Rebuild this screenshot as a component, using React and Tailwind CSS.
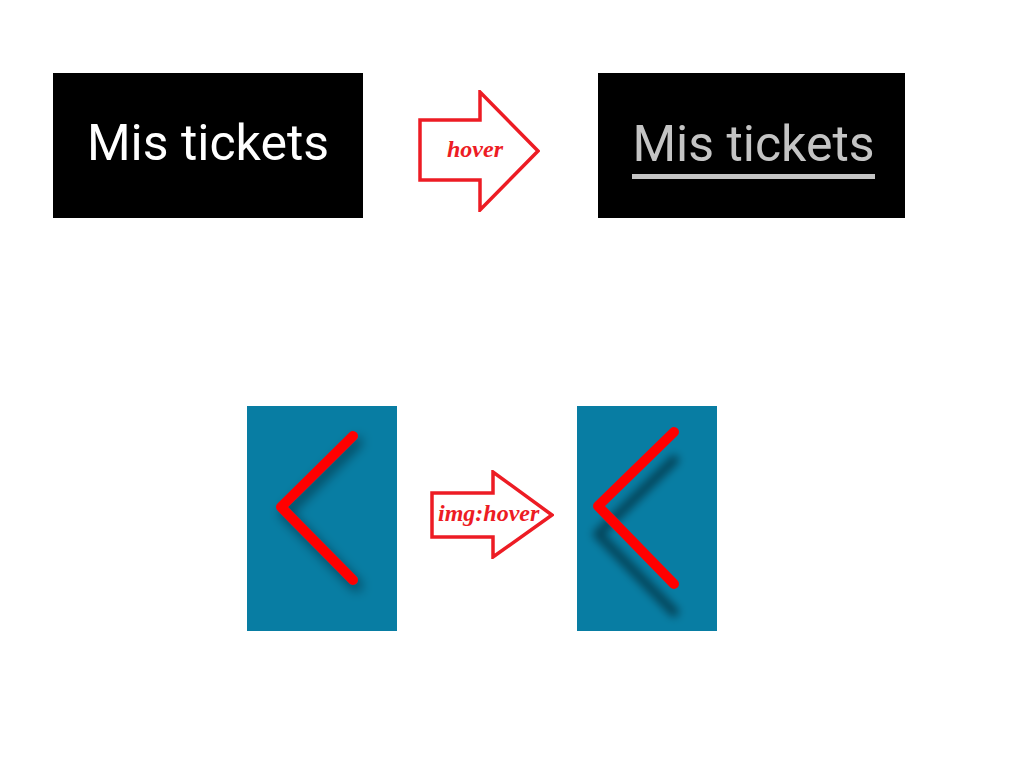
import React from 'react';

// Outlined red arrow with a label inside
const HoverArrow = ({ width, height, body, neck, tipY }) => (
  <svg width={width} height={height} viewBox={`0 0 ${width} ${height}`}>
    <polygon
      points={`2,${body[0]} ${neck},${body[0]} ${neck},2 ${width - 2},${tipY} ${neck},${height - 2} ${neck},${body[1]} 2,${body[1]}`}
      fill="white"
      stroke="#ed1c24"
      strokeWidth="3.5"
    />
  </svg>
);

const Chevron = ({ w, h, points, shadow, id }) => (
  <svg width={w} height={h} viewBox={`0 0 ${w} ${h}`}>
    <defs>
      <filter id={id} x="-50%" y="-50%" width="200%" height="200%">
        <feDropShadow dx={shadow[0]} dy={shadow[1]} stdDeviation={shadow[2]} floodColor="#000" floodOpacity={shadow[3]} />
      </filter>
    </defs>
    <polyline
      points={points}
      fill="none"
      stroke="#ff0000"
      strokeWidth="10"
      strokeLinecap="round"
      strokeLinejoin="round"
      filter={`url(#${id})`}
    />
  </svg>
);

export default function App() {
  return (
    <div className="min-h-[759px] w-[1027px] bg-white font-['Roboto',sans-serif]">
      {/* Top row: menu link hover */}
      <div className="flex items-start pt-[73px] pl-[53px]">
        <div className="flex h-[145px] w-[310px] items-center justify-center bg-black pb-[5px]">
          <span className="text-[50px] leading-none text-white">Mis tickets</span>
        </div>
        <div className="relative ml-[55px] mt-[17px] h-[122px] w-[122px]">
          <HoverArrow width={122} height={122} body={[30, 90]} neck={62} tipY={61} />
          <span className="absolute left-[29px] top-[47px] font-['Liberation_Serif',serif] text-[24px] font-bold italic leading-none text-[#ed1c24]">
            hover
          </span>
        </div>
        <div className="ml-[58px] flex h-[145px] w-[307px] items-center justify-center bg-black pt-[7px] pl-[4px]">
          <div className="flex flex-col">
            <span className="text-[50px] leading-none text-[#c4c4c4]">Mis tickets</span>
            <div className="mt-[5px] h-[5px] bg-[#c4c4c4]" />
          </div>
        </div>
      </div>

      {/* Bottom row: image hover */}
      <div className="flex items-start pt-[188px] pl-[247px]">
        <div className="flex h-[225px] w-[150px] bg-[#087da3]">
          <Chevron w={150} h={225} points="106,30 34,101 106,174" shadow={[4, 6, 6, 0.45]} id="s1" />
        </div>
        <div className="relative ml-[33px] mt-[64px] h-[89px] w-[124px]">
          <HoverArrow width={124} height={89} body={[23, 67]} neck={63} tipY={45} />
          <span className="absolute left-[8px] top-[31px] whitespace-nowrap font-['Liberation_Serif',serif] text-[24px] font-bold italic leading-none text-[#ed1c24]">
            img:hover
          </span>
        </div>
        <div className="ml-[23px] flex h-[225px] w-[140px] bg-[#087da3]">
          <Chevron w={140} h={225} points="97,26 21,100 97,178" shadow={[0, 28, 4, 0.45]} id="s2" />
        </div>
      </div>
    </div>
  );
}
